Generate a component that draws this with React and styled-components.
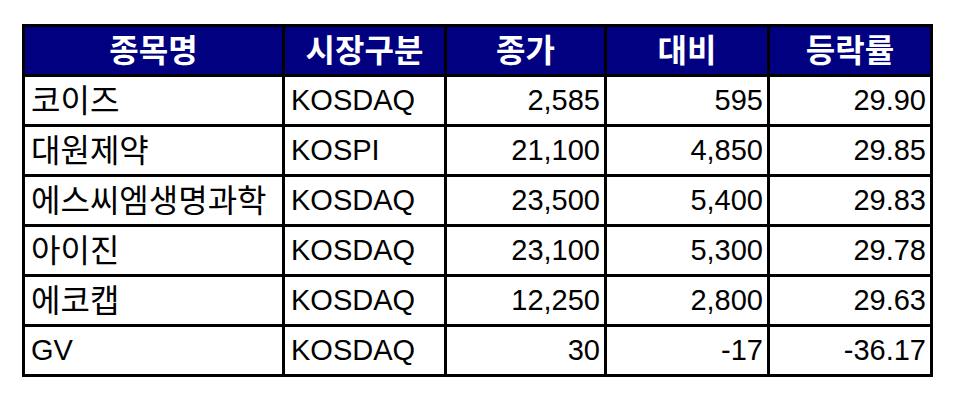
import styled, { createGlobalStyle } from 'styled-components';

const GlobalStyle = createGlobalStyle`
  html, body {
    margin: 0;
    padding: 0;
    background: #fff;
  }
`;

const Page = styled.div`
  padding: 24px 0 0 22px;
`;

const Table = styled.table`
  border-collapse: collapse;
  table-layout: fixed;
  width: 911px;
  font-family: 'Liberation Sans', 'Noto Sans CJK KR', sans-serif;
  font-size: 29px;
  color: #000;
  border: 3px solid #000;
`;

const HeadCell = styled.th`
  background-color: #000080;
  color: #fff;
  font-weight: bold;
  font-size: 32px;
  text-align: center;
  border: 3px solid #000;
  height: 47px;
  padding: 0;
  line-height: 1;
  vertical-align: middle;
`;

const Cell = styled.td`
  border: 3px solid #000;
  height: 47px;
  line-height: 1;
  vertical-align: middle;
  white-space: nowrap;
  font-size: ${props => (props.hangul ? '32px' : '29px')};
  text-align: ${props => (props.num ? 'right' : 'left')};
  padding: ${props => (props.num ? '0 4px 0 0' : '0 0 0 6px')};
`;

const columns = [
  { title: '종목명', width: '260px' },
  { title: '시장구분', width: '162px' },
  { title: '종가', width: '160px' },
  { title: '대비', width: '163px' },
  { title: '등락률', width: '163px' },
];

const stocks = [
  ['코이즈', 'KOSDAQ', '2,585', '595', '29.90'],
  ['대원제약', 'KOSPI', '21,100', '4,850', '29.85'],
  ['에스씨엠생명과학', 'KOSDAQ', '23,500', '5,400', '29.83'],
  ['아이진', 'KOSDAQ', '23,100', '5,300', '29.78'],
  ['에코캡', 'KOSDAQ', '12,250', '2,800', '29.63'],
  ['GV', 'KOSDAQ', '30', '-17', '-36.17'],
];

const isHangul = text => /[\uac00-\ud7a3]/.test(text);

const App = () => {
  return (
    <Page>
      <GlobalStyle />
      <Table>
        <colgroup>
          {columns.map(col => (
            <col key={col.title} style={{ width: col.width }} />
          ))}
        </colgroup>
        <thead>
          <tr>
            {columns.map(col => (
              <HeadCell key={col.title}>{col.title}</HeadCell>
            ))}
          </tr>
        </thead>
        <tbody>
          {stocks.map(row => (
            <tr key={row[0]}>
              <Cell hangul={isHangul(row[0])}>{row[0]}</Cell>
              <Cell>{row[1]}</Cell>
              <Cell num>{row[2]}</Cell>
              <Cell num>{row[3]}</Cell>
              <Cell num>{row[4]}</Cell>
            </tr>
          ))}
        </tbody>
      </Table>
    </Page>
  );
};

export default App;
